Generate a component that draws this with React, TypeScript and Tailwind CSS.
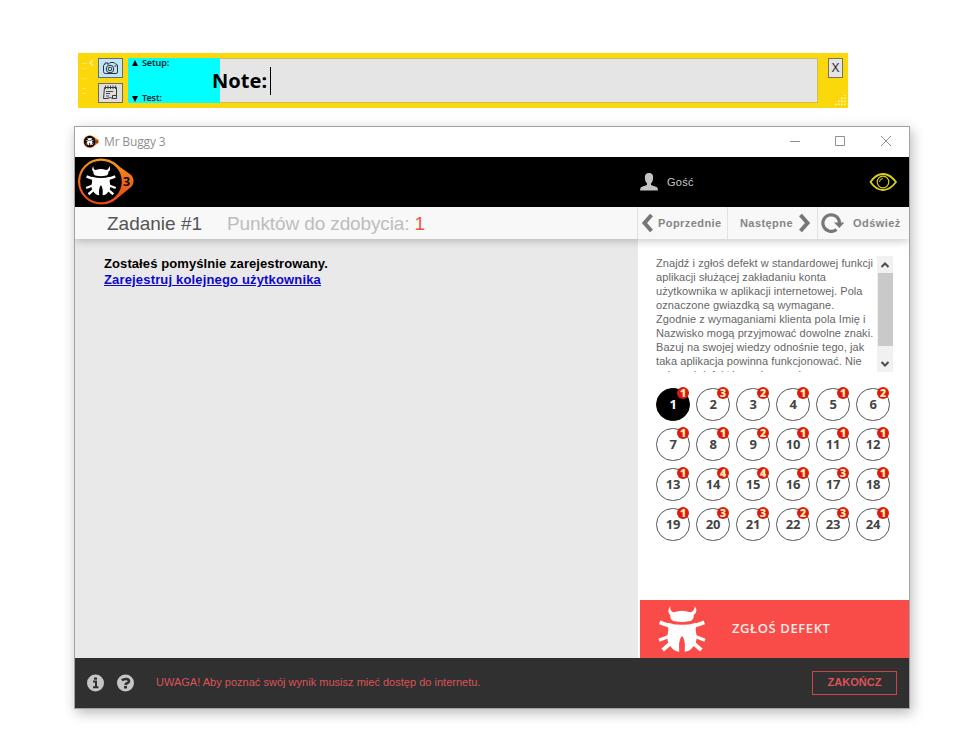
import React from "react";

const badges = [1, 3, 2, 1, 1, 2, 1, 1, 2, 1, 1, 1, 1, 4, 4, 1, 3, 1, 1, 3, 3, 2, 3, 1];

const description = [
  "Znajdź i zgłoś defekt w standardowej funkcji",
  "aplikacji służącej zakładaniu konta",
  "użytkownika w aplikacji internetowej. Pola",
  "oznaczone gwiazdką są wymagane.",
  "Zgodnie z wymaganiami klienta pola Imię i",
  "Nazwisko mogą przyjmować dowolne znaki.",
  "Bazuj na swojej wiedzy odnośnie tego, jak",
  "taka aplikacja powinna funkcjonować. Nie",
  "zgłaszaj defektów związanych z",
];

function BugShape() {
  return (
    <>
      <path
        fill="#fff"
        d="M37 0C28 12 31 22 37 27C36 39 42 45 52 46Q72 50 92 46C102 45 108 39 107 27C115 22 119 12 110 0C111 12 103 18 96 19Q84 14 72 14Q60 14 48 19C41 18 35 12 37 0Z"
      />
      <path
        fill="#fff"
        d="M30 50Q72 63 114 50L113 72C117 92 118 104 109 117C102 130 90 137 80 137C82 116 80 97 72 90C64 97 62 116 64 137C54 137 42 130 35 117C26 104 27 92 31 72Z"
      />
      <g stroke="#fff" strokeWidth="11.5" fill="none">
        <path d="M5 49L36 60M139 49L108 60" />
        <path d="M3 103L36 90M141 103L108 90" strokeWidth="9.500" />
        <path d="M14 132L42 108M130 132L102 108" />
      </g>
    </>
  );
}

function Logo({ className }: { className: string }) {
  return (
    <svg viewBox="0 0 57 47" className={className}>
      <defs>
        <linearGradient id="ring" x1="0" y1="0" x2="0" y2="1">
          <stop offset="0" stopColor="#f59a1c" />
          <stop offset="0.5" stopColor="#ee6a18" />
          <stop offset="1" stopColor="#e94414" />
        </linearGradient>
      </defs>
      <path
        fill="url(#ring)"
        d="M24 0.5C32 0.5 38 4 43 9L53.500 16.500Q56.500 19 56.500 23Q56.500 27 53.500 29.500L43 38C38 43 32 46.500 24 46.500A23 23 0 0 1 24 0.500Z"
      />
      <circle cx="24" cy="23.500" r="20.800" fill="#000" />
      <g transform="translate(8.500 8) scale(0.214)">
        <BugShape />
      </g>
      <text x="46" y="27.500" fontSize="12.500" fontWeight="700" fill="#180800" fontFamily="Open Sans, sans-serif">
        3
      </text>
    </svg>
  );
}

function NoteBar() {
  return (
    <div className="ml-[78px] mt-[53px] flex h-[55px] w-[770px] bg-[#fbd80c] py-[5px]">
      <svg width="20" height="45" className="shrink-0" fill="none" stroke="#fff09a">
        <path d="M4 5.500H9M4 10.500H8M4 20.500H8M4 30.500H8M4 35.500H9" opacity=".5" />
        <path d="M15 2L12 5L15 8" strokeWidth="1.500" />
      </svg>
      <div className="flex w-[30px] shrink-0 flex-col gap-[5px]">
        <div className="flex h-[20px] w-[25px] items-center justify-center border border-[#56727e] bg-[#c4e4f5]">
          <svg width="17" height="14" viewBox="0 0 17 14" fill="none" stroke="#27343c">
            <path d="M1.500 4.500Q1.500 3.500 3 3.500V2H6V3.500L8 1.500H12L13.500 3Q15.500 3 15.500 5V11Q15.500 12.500 14 12.500H3.500Q1.500 12.500 1.500 10.500Z" />
            <circle cx="8" cy="8" r="3.800" />
            <circle cx="8" cy="8" r="1.800" />
            <path d="M12.500 5H14.500" />
          </svg>
        </div>
        <div className="flex h-[20px] w-[25px] items-center justify-center border border-[#6a6a66] bg-[#dedede]">
          <svg width="17" height="16" viewBox="0 0 17 16" fill="none" stroke="#383838">
            <path d="M2.500 2.500H14.500V13.500H10.500V10.500H14.500M10.500 13.500L8.500 12.500L5 13.500H1.500L2.500 2.500" />
            <path d="M3.500 0.500V4M6 0.500V4M8.500 0.500V4M11 0.500V4M13.500 0.500V4" strokeWidth=".9" />
            <path d="M4 6.500H11M4 8.500H8M4 11H7" strokeWidth=".9" />
          </svg>
        </div>
      </div>
      <div className="flex h-[45px] w-[690px] border border-l-0 border-[#c9bd68] bg-[#e5e5e5]">
        <div className="-my-px flex h-[45px] w-[92px] shrink-0 flex-col justify-between bg-[#00ffff] font-['Noto_Sans',sans-serif] text-[9px] font-semibold leading-[10px] tracking-[-0.1px] text-[#07282c]">
          <span className="flex gap-[4px] pl-[4px]">
            <svg width="6" height="10" fill="#000"><path d="M0 8L3 2L6 8Z" /></svg>Setup:
          </span>
          <span className="flex gap-[4px] pl-[4px]">
            <svg width="6" height="10" fill="#000"><path d="M0 3L3 9L6 3Z" /></svg>Test:
          </span>
        </div>
        <div className="-ml-[8px] flex h-[43px] items-center whitespace-nowrap font-['Noto_Sans',sans-serif] text-[20px] font-bold text-black">
          Note:<span className="ml-[3px] h-[28px] w-px bg-black" />
        </div>
      </div>
      <div className="flex flex-1 flex-col justify-between pl-[10px]">
        <div className="flex h-[20px] w-[15px] items-center justify-center border border-[#77745c] bg-[#e4e4e4] font-['Open_Sans',sans-serif] text-[13px] text-[#222]">
          X
        </div>
        <svg width="11" height="11" className="ml-[7px] mt-auto -mb-[3px]" fill="#fff8c8">
          {[0, 1, 2, 3].flatMap((r) =>
            Array.from({ length: r + 1 }, (_, c) => (
              <rect key={`${r}-${c}`} x={9 - c * 3} y={r * 3 - 0.5} width="1.500" height="1.500" />
            )),
          )}
        </svg>
      </div>
    </div>
  );
}

function TitleBar() {
  return (
    <div className="flex h-[30px] items-center bg-white pl-[8px]">
      <Logo className="-mt-[2px] h-[13px] w-[16px]" />
      <span className="ml-[5px] font-['Open_Sans',sans-serif] text-[12px] tracking-[-0.15px] text-[#8f8f8f]">Mr Buggy 3</span>
      <svg width="104" height="12" className="-mt-[2px] ml-auto mr-[16px]" fill="none" stroke="#929292">
        <path d="M1 6.500H11M46.500 1.500H55.500V10.500H46.500ZM92 1L102 11M102 1L92 11" />
      </svg>
    </div>
  );
}

function Header() {
  return (
    <div className="flex h-[50px] items-center bg-black pl-[2px] pr-[12px]">
      <Logo className="-mt-px h-[47px] w-[57px]" />
      <svg width="18" height="18" viewBox="0 0 18 18" className="ml-[506px]" fill="#c4c4c4">
        <path d="M9 0C12.500 0 13.500 2.500 13 5.500C13 8 12 9 11 10.500V12C13 13 17 13.500 17.500 15L18 17.500H0L0.500 15C1 13.500 5 13 7 12V10.500C6 9 5 8 5 5.500C4.500 2.500 5.500 0 9 0Z" />
      </svg>
      <span className="ml-[9px] font-['Liberation_Sans',Arial,sans-serif] text-[11px] tracking-[0.3px] text-[#c8c8c8]">Gość</span>
      <svg width="28" height="18" viewBox="0 0 28 18" className="ml-auto" fill="none" stroke="#d8cf20" strokeWidth="1.800">
        <path d="M1.500 9Q7 1 14 1Q21 1 27 9Q21 17 14 17Q7 17 1.500 9Z" />
        <circle cx="14" cy="9" r="5.800" strokeWidth="1.200" />
        <path d="M10.500 9A3.500 3.500 0 0 1 14 5.500" strokeWidth="1" />
      </svg>
    </div>
  );
}

function Toolbar() {
  return (
    <div className="relative z-10 flex h-[32px] bg-[#f8f8f8] font-['Liberation_Sans',Arial,sans-serif] shadow-[0_2px_8px_rgba(0,0,0,0.22)] [clip-path:inset(0_0_-12px_0)]">
      <div className="flex w-[562px] items-center whitespace-nowrap pl-[32px] pt-[2px] text-[19px] text-[#555]">
        <span className="w-[120px]">Zadanie #1</span>
        <span className="tracking-[-0.12px] text-[#bdbdbd]">
          Punktów do zdobycia: <span className="text-[#e9573d]">1</span>
        </span>
      </div>
      <div className="flex flex-1 text-[11px] font-bold tracking-[0.43px] text-[#858585]">
        <div className="flex w-[90px] items-center border-l border-[#e2e2e2] pl-[3px]">
          <svg width="12" height="20" fill="none" stroke="#777" strokeWidth="4"><path d="M10.500 2L3.500 10L10.500 18" /></svg>
          <span className="ml-[5px]">Poprzednie</span>
        </div>
        <div className="flex w-[90px] items-center border-l border-[#e2e2e2] pl-[12px]">
          <span>Następne</span>
          <svg width="12" height="20" className="ml-[6px]" fill="none" stroke="#777" strokeWidth="4"><path d="M1.500 2L8.500 10L1.500 18" /></svg>
        </div>
        <div className="flex flex-1 items-center border-l border-[#e2e2e2] pl-[3px]">
          <svg width="23" height="20" viewBox="0 0 23 20" className="shrink-0">
            <path d="M15.500 16.500A8.300 8.300 0 1 1 18.500 10" fill="none" stroke="#777" strokeWidth="3.200" />
            <path d="M13 9.500H23.500L18.300 15Z" fill="#777" />
          </svg>
          <span className="ml-[9px]">Odśwież</span>
        </div>
      </div>
    </div>
  );
}

function Description() {
  return (
    <div className="flex h-[116px] w-[237px]">
      <div className="h-[116px] w-[221px] overflow-hidden text-[11px] leading-[14px] tracking-[0.07px] text-[#666]">
        {description.map((line) => (
          <div key={line} className="whitespace-nowrap">{line}</div>
        ))}
      </div>
      <div className="flex w-[16px] shrink-0 flex-col items-center bg-[#f1f1f1]">
        <svg width="16" height="17" className="shrink-0" fill="none" stroke="#4c4c4c" strokeWidth="2"><path d="M4.500 11L8 7.500L11.500 11" /></svg>
        <div className="h-[73px] w-[15px] bg-[#c9c9c9]" />
        <svg width="16" height="17" className="mt-auto shrink-0" fill="none" stroke="#4c4c4c" strokeWidth="2"><path d="M4.500 7L8 10.500L11.500 7" /></svg>
      </div>
    </div>
  );
}

function TaskGrid() {
  return (
    <div className="mt-[16px] grid w-[240px] grid-cols-6 gap-y-[7px] font-['Open_Sans',sans-serif]">
      {badges.map((count, i) => (
        <div
          key={i}
          className={`relative flex h-[33px] w-[34px] items-center justify-center rounded-full border text-[13px] font-bold tracking-[-0.2px] ${
            i === 0 ? "border-black bg-black text-white" : "border-[#555] bg-white text-[#444]"
          }`}
        >
          {i + 1}
          <span className="absolute -top-[2px] left-[20px] flex h-[12px] w-[12px] items-center justify-center rounded-full bg-[#dd1a0c] text-[10.500px] font-extrabold leading-none tracking-normal text-[#ffeeba]">
            {count}
          </span>
        </div>
      ))}
    </div>
  );
}

function Footer() {
  return (
    <div className="flex h-[50px] items-center bg-[#303030] pb-px pl-[12px] pr-[12px]">
      <svg width="48" height="18" viewBox="0 0 48 18">
        <circle cx="8.500" cy="9" r="8.500" fill="#c6c6c6" />
        <circle cx="38.500" cy="9" r="8.500" fill="#c6c6c6" />
        <path d="M6 7.500H9V13M6 13.300H11.500" stroke="#303030" strokeWidth="2" fill="none" />
        <rect x="7" y="3.500" width="3" height="2.200" fill="#303030" />
        <path d="M34.800 6.300Q36.500 5 39 5Q42 5 42 7.200Q42 8.700 40 9.300Q38.700 9.700 38.500 11" stroke="#303030" strokeWidth="2.600" fill="none" />
        <rect x="37" y="12" width="3" height="2.500" fill="#303030" />
      </svg>
      <span className="ml-[21px] whitespace-nowrap text-[11px] tracking-[0.015px] text-[#dc5358]">
        UWAGA! Aby poznać swój wynik musisz mieć dostęp do internetu.
      </span>
      <div className="ml-auto flex h-[24px] w-[85px] items-center justify-center border border-[#cf4249] text-[11px] font-bold tracking-[0.05px] text-[#dc5358]">
        ZAKOŃCZ
      </div>
    </div>
  );
}

export default function App() {
  return (
    <div className="h-[733px] w-[970px] overflow-hidden bg-white font-['Liberation_Sans',Arial,sans-serif]">
      <NoteBar />
      <div className="ml-[74px] mt-[18px] w-[836px] border border-[#a2a2a2] shadow-[2px_4px_12px_rgba(0,0,0,0.28)]">
        <TitleBar />
        <Header />
        <Toolbar />
        <div className="flex h-[419px]">
          <div className="w-[563px] bg-[#e9e9e9] pl-[29px] pt-[17px] text-[13px] font-bold leading-[16px] text-black">
            <div className="tracking-[0.09px]">Zostałeś pomyślnie zarejestrowany.</div>
            <div className="tracking-[0.16px] text-[#0c08c8] underline">Zarejestruj kolejnego użytkownika</div>
          </div>
          <div className="flex flex-1 flex-col bg-white pl-[2px]">
            <div className="flex-1 pl-[16px] pt-[17px]">
              <Description />
              <TaskGrid />
            </div>
            <div className="flex h-[58px] items-center bg-[#f94b47] pl-[18px]">
              <svg width="48" height="46" viewBox="0 0 144 138"><BugShape /></svg>
              <span className="ml-[26px] font-['Open_Sans',sans-serif] text-[13px] font-semibold tracking-[0.6px] text-[#ffecea]">ZGŁOŚ DEFEKT</span>
            </div>
          </div>
        </div>
        <Footer />
      </div>
    </div>
  );
}
